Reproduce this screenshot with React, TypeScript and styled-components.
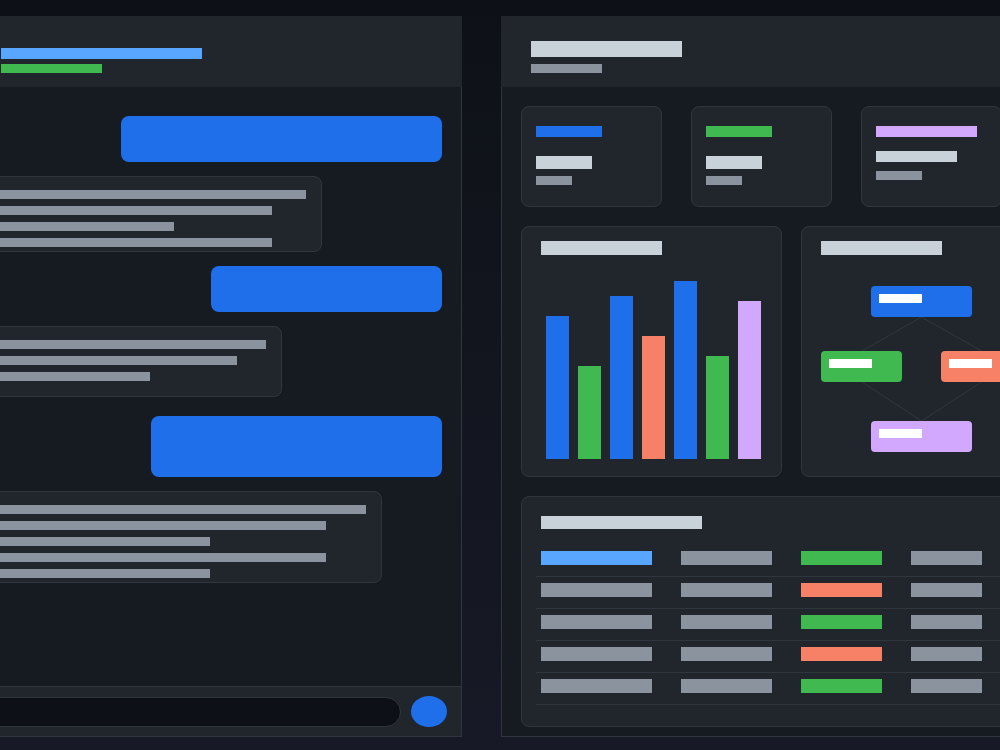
import React from 'react';
import styled, { createGlobalStyle } from 'styled-components';

const colors = {
    blue: '#1f6feb',
    sky: '#58a6ff',
    green: '#3fb950',
    coral: '#f78166',
    violet: '#d2a8ff',
    title: '#c9d1d9',
    muted: '#8b949e',
    white: '#ffffff',
    card: '#21262d',
    surface: '#161b22',
    border: '#30363d',
    well: '#0d1117',
};

type IncomingMessage = { kind: 'in'; lines: number[]; gapBefore: number; padBottom: number };
type OutgoingMessage = { kind: 'out'; width: number; height: number; gapBefore: number };
type Message = IncomingMessage | OutgoingMessage;

const messages: Message[] = [
    { kind: 'out', width: 321, height: 46, gapBefore: 0 },
    { kind: 'in', lines: [329, 295, 197, 295], gapBefore: 14, padBottom: 4 },
    { kind: 'out', width: 231, height: 46, gapBefore: 14 },
    { kind: 'in', lines: [289, 260, 173], gapBefore: 14, padBottom: 15 },
    { kind: 'out', width: 291, height: 61, gapBefore: 19 },
    { kind: 'in', lines: [389, 349, 233, 349, 233], gapBefore: 14, padBottom: 4 },
];

const stats = [
    { accent: colors.blue, label: 66, value: 56, valueH: 13, valueGap: 19, sub: 36, subGap: 7 },
    { accent: colors.green, label: 66, value: 56, valueH: 13, valueGap: 19, sub: 36, subGap: 7 },
    { accent: colors.violet, label: 101, value: 81, valueH: 11, valueGap: 14, sub: 46, subGap: 9 },
];

const chartBars = [
    { h: 143, c: colors.blue },
    { h: 93, c: colors.green },
    { h: 163, c: colors.blue },
    { h: 123, c: colors.coral },
    { h: 178, c: colors.blue },
    { h: 103, c: colors.green },
    { h: 158, c: colors.violet },
];

const flowNodes = [
    { x: 50, y: 15, w: 101, c: colors.blue },
    { x: 0, y: 80, w: 81, c: colors.green },
    { x: 120, y: 80, w: 81, c: colors.coral },
    { x: 50, y: 150, w: 101, c: colors.violet },
];

const flowEdges = [
    [100.5, 46, 41, 80],
    [100.5, 46, 160.5, 80],
    [41, 111, 100.5, 150],
    [160.5, 111, 100.5, 150],
];

const columns = [140, 120, 110, 100];
const statusColors = [colors.green, colors.coral, colors.green, colors.coral, colors.green];

const App: React.FC = () => {
    return (
        <>
            <GlobalStyle />
            <Page>
                <ChatPanel>
                    <PanelHeader $pad={61}>
                        <Bar $w={201} $h={11} $c={colors.sky} />
                        <Bar $w={101} $h={9} $c={colors.green} $mt={5} />
                    </PanelHeader>
                    <PanelBody>
                        <MessageList>
                            {messages.map((msg, index) =>
                                msg.kind === 'out' ? (
                                    <Outgoing
                                        key={index}
                                        $w={msg.width}
                                        $h={msg.height}
                                        $mt={msg.gapBefore}
                                    />
                                ) : (
                                    <Incoming
                                        key={index}
                                        $mt={msg.gapBefore}
                                        $pb={msg.padBottom}
                                    >
                                        {msg.lines.map((w, i) => (
                                            <Bar key={i} $w={w} $h={9} $c={colors.muted} />
                                        ))}
                                    </Incoming>
                                )
                            )}
                        </MessageList>
                        <Composer>
                            <InputField />
                            <SendButton />
                        </Composer>
                    </PanelBody>
                </ChatPanel>

                <DashPanel>
                    <PanelHeader $pad={30}>
                        <Bar $w={151} $h={16} $c={colors.title} />
                        <Bar $w={71} $h={9} $c={colors.muted} $mt={7} />
                    </PanelHeader>
                    <DashBody>
                        <StatRow>
                            {stats.map((s, i) => (
                                <StatCard key={i}>
                                    <Bar $w={s.label} $h={11} $c={s.accent} />
                                    <Bar $w={s.value} $h={s.valueH} $c={colors.title} $mt={s.valueGap} />
                                    <Bar $w={s.sub} $h={9} $c={colors.muted} $mt={s.subGap} />
                                </StatCard>
                            ))}
                        </StatRow>

                        <WidgetRow>
                            <Widget>
                                <Bar $w={121} $h={14} $c={colors.title} />
                                <BarsArea>
                                    {chartBars.map((b, i) => (
                                        <ChartBar key={i} style={{ height: b.h }} $c={b.c} />
                                    ))}
                                </BarsArea>
                            </Widget>
                            <Widget>
                                <Bar $w={121} $h={14} $c={colors.title} />
                                <FlowCanvas>
                                    <FlowLines width="221" height="181">
                                        {flowEdges.map(([x1, y1, x2, y2], i) => (
                                            <line
                                                key={i}
                                                x1={x1}
                                                y1={y1}
                                                x2={x2}
                                                y2={y2}
                                                stroke={colors.border}
                                                strokeWidth="1"
                                            />
                                        ))}
                                    </FlowLines>
                                    {flowNodes.map((n, i) => (
                                        <FlowNode
                                            key={i}
                                            style={{ left: n.x, top: n.y, width: n.w }}
                                            $c={n.c}
                                        >
                                            <Bar $w={43} $h={9} $c={colors.white} />
                                        </FlowNode>
                                    ))}
                                </FlowCanvas>
                            </Widget>
                        </WidgetRow>

                        <TableCard>
                            <Bar $w={161} $h={13} $c={colors.title} />
                            <Table>
                                {statusColors.map((status, row) => (
                                    <TableRow key={row}>
                                        <Cell $w={columns[0]}>
                                            <Bar
                                                $w={111}
                                                $h={14}
                                                $c={row === 0 ? colors.sky : colors.muted}
                                            />
                                        </Cell>
                                        <Cell $w={columns[1]}>
                                            <Bar $w={91} $h={14} $c={colors.muted} />
                                        </Cell>
                                        <Cell $w={columns[2]}>
                                            <Bar $w={81} $h={14} $c={status} />
                                        </Cell>
                                        <Cell $w={columns[3]}>
                                            <Bar $w={71} $h={14} $c={colors.muted} />
                                        </Cell>
                                    </TableRow>
                                ))}
                            </Table>
                        </TableCard>
                    </DashBody>
                </DashPanel>
            </Page>
        </>
    );
};

export default App;

const GlobalStyle = createGlobalStyle`
    * {
        box-sizing: border-box;
    }
    html,
    body {
        margin: 0;
        height: 100%;
    }
    body {
        background: linear-gradient(180deg, #0d1117 0%, #171a26 100%);
        font-family: Inter, 'Noto Sans', sans-serif;
        overflow: hidden;
    }
`;

const Page = styled.div`
    display: flex;
    gap: 39px;
    height: 750px;
    padding: 16px 0 13px;
    overflow: hidden;
`;

const Bar = styled.span<{ $w: number; $h: number; $c: string; $mt?: number }>`
    display: block;
    flex-shrink: 0;
    width: ${(p) => p.$w}px;
    height: ${(p) => p.$h}px;
    margin-top: ${(p) => p.$mt ?? 0}px;
    background: ${(p) => p.$c};
`;

const ChatPanel = styled.section`
    display: flex;
    flex: 0 0 522px;
    flex-direction: column;
    margin-left: -60px;
`;

const DashPanel = styled.section`
    display: flex;
    flex: 0 0 580px;
    flex-direction: column;
`;

const PanelHeader = styled.header<{ $pad: number }>`
    display: flex;
    flex-direction: column;
    flex-shrink: 0;
    justify-content: flex-end;
    height: 71px;
    padding: 0 0 14px ${(p) => p.$pad}px;
    background: ${colors.card};
`;

const PanelBody = styled.div`
    display: flex;
    flex: 1;
    flex-direction: column;
    min-height: 0;
    background: ${colors.surface};
    border: 1px solid ${colors.border};
    border-top: none;
`;

const MessageList = styled.div`
    display: flex;
    flex: 1;
    flex-direction: column;
    padding: 29px 19px 0 20px;
    overflow: hidden;
`;

const Outgoing = styled.div<{ $w: number; $h: number; $mt: number }>`
    align-self: flex-end;
    flex-shrink: 0;
    width: ${(p) => p.$w}px;
    height: ${(p) => p.$h}px;
    margin-top: ${(p) => p.$mt}px;
    background: ${colors.blue};
    border-radius: 8px;
`;

const Incoming = styled.div<{ $mt: number; $pb: number }>`
    align-self: flex-start;
    display: flex;
    flex-direction: column;
    flex-shrink: 0;
    gap: 7px;
    margin-top: ${(p) => p.$mt}px;
    padding: 13px 15px ${(p) => p.$pb}px 15px;
    background: ${colors.card};
    border: 1px solid ${colors.border};
    border-radius: 8px;
`;

const Composer = styled.div`
    display: flex;
    align-items: center;
    flex-shrink: 0;
    gap: 10px;
    height: 50px;
    padding: 0 14px 0 20px;
    background: ${colors.card};
    border-top: 1px solid ${colors.border};
`;

const InputField = styled.div`
    flex: 1;
    height: 30px;
    background: ${colors.well};
    border: 1px solid ${colors.border};
    border-radius: 15px;
`;

const SendButton = styled.div`
    width: 36px;
    height: 31px;
    background: ${colors.blue};
    border-radius: 50%;
`;

const DashBody = styled.div`
    display: flex;
    flex: 1;
    flex-direction: column;
    gap: 19px;
    padding: 19px 20px 0 19px;
    background: ${colors.surface};
    border: 1px solid ${colors.border};
    border-top: none;
`;

const StatRow = styled.div`
    display: flex;
    gap: 29px;
`;

const StatCard = styled.div`
    display: flex;
    flex-direction: column;
    flex-shrink: 0;
    width: 141px;
    height: 101px;
    padding: 19px 14px;
    background: ${colors.card};
    border: 1px solid ${colors.border};
    border-radius: 8px;
`;

const WidgetRow = styled.div`
    display: flex;
    gap: 19px;
`;

const Widget = styled.div`
    display: flex;
    flex-direction: column;
    flex-shrink: 0;
    width: 261px;
    height: 251px;
    padding: 14px 19px;
    background: ${colors.card};
    border: 1px solid ${colors.border};
    border-radius: 8px;
`;

const BarsArea = styled.div`
    display: flex;
    align-items: flex-end;
    gap: 9px;
    height: 204px;
    padding-left: 5px;
`;

const ChartBar = styled.div<{ $c: string }>`
    width: 23px;
    background: ${(p) => p.$c};
`;

const FlowCanvas = styled.div`
    position: relative;
    height: 181px;
    margin-top: 16px;
`;

const FlowLines = styled.svg`
    position: absolute;
    top: 0;
    left: 0;
    overflow: visible;
`;

const FlowNode = styled.div<{ $c: string }>`
    position: absolute;
    height: 31px;
    padding: 8px;
    background: ${(p) => p.$c};
    border-radius: 4px;
`;

const TableCard = styled.div`
    display: flex;
    flex-direction: column;
    height: 231px;
    padding: 19px 19px;
    background: ${colors.card};
    border: 1px solid ${colors.border};
    border-radius: 8px;
`;

const Table = styled.div`
    display: flex;
    flex-direction: column;
    margin: 16px 0 0 -5px;
`;

const TableRow = styled.div`
    display: flex;
    padding: 6px 0 11px;
    border-bottom: 1px solid ${colors.border};
`;

const Cell = styled.div<{ $w: number }>`
    flex-shrink: 0;
    width: ${(p) => p.$w}px;
    padding-left: 5px;
`;
